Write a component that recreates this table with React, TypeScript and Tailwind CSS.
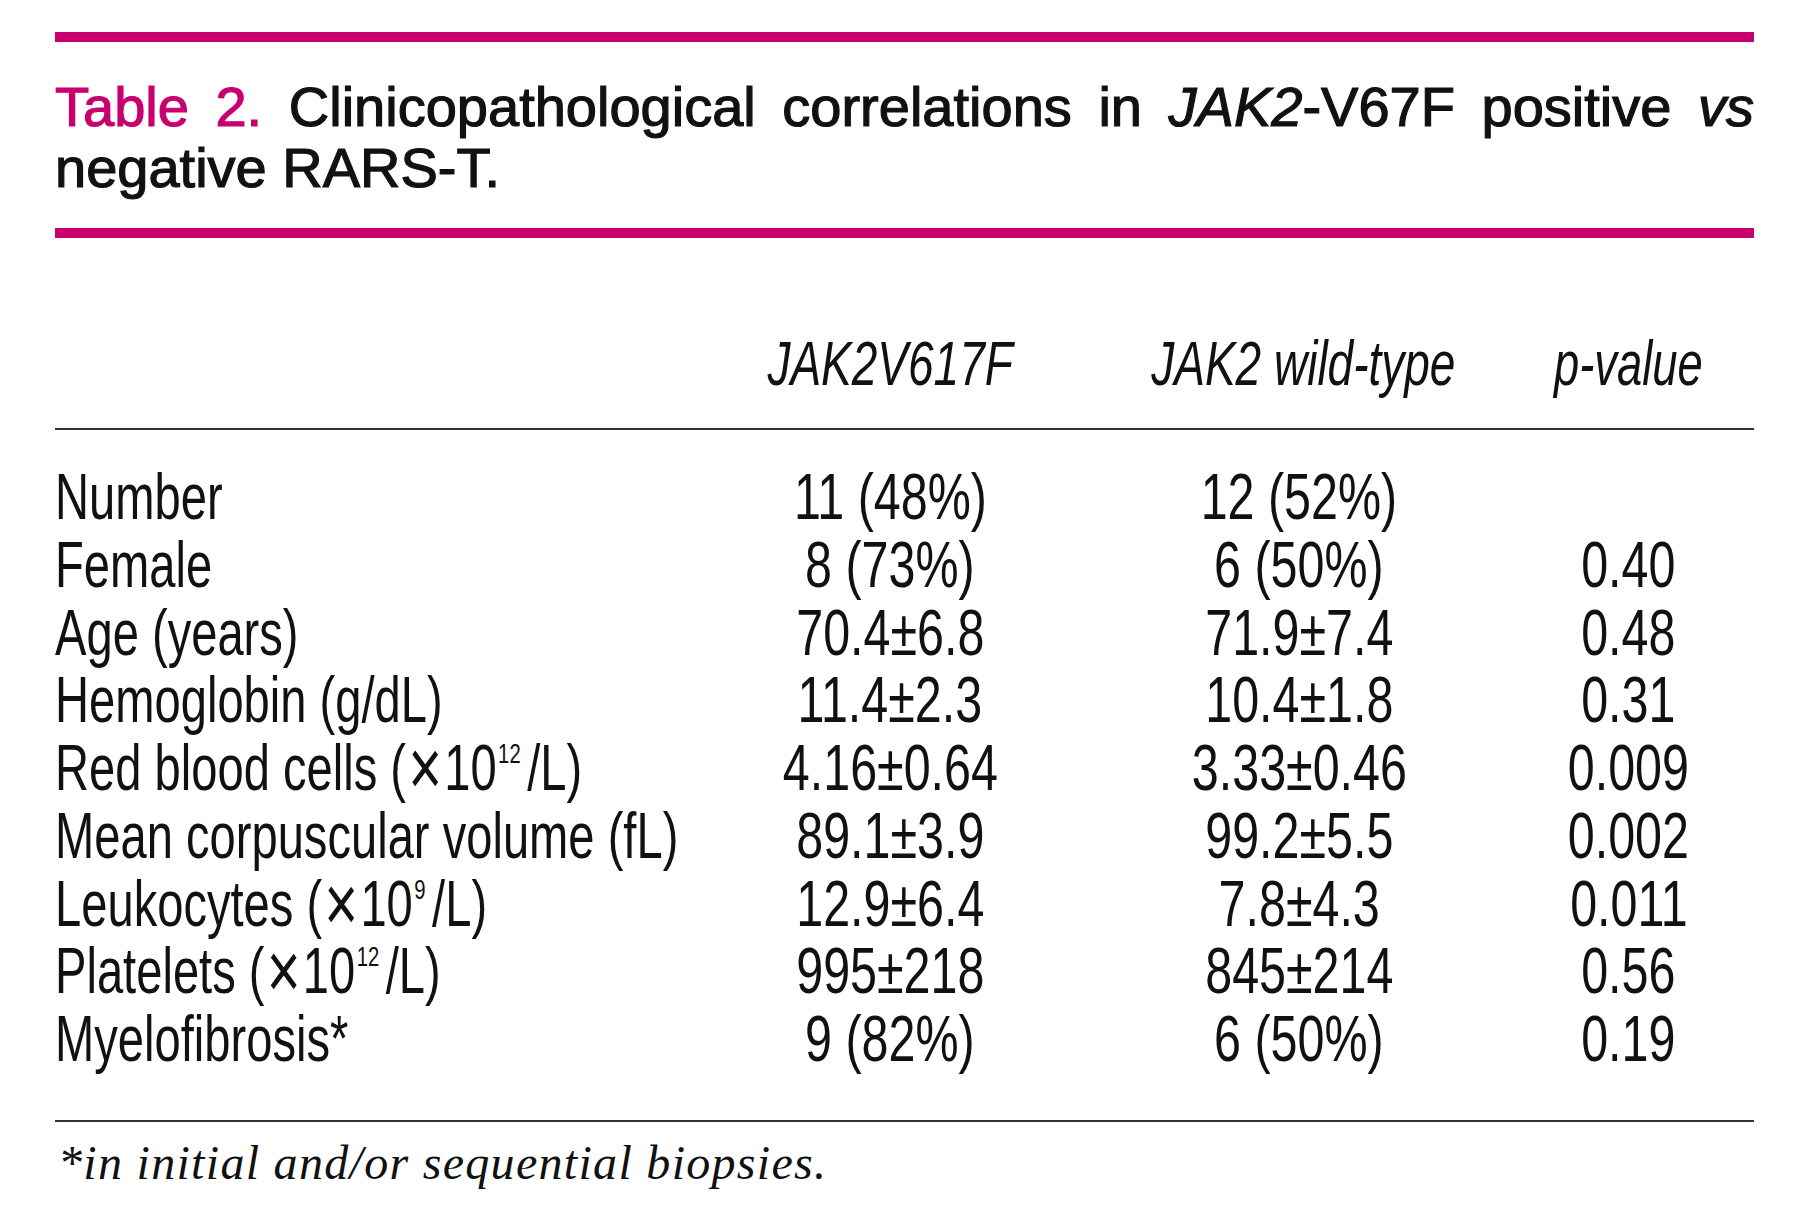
import React from "react";

function Label({ children }: { children: React.ReactNode }) {
  return (
    <div className="whitespace-nowrap">
      <span className="inline-block origin-left scale-x-[0.725]">{children}</span>
    </div>
  );
}

function Val({ children }: { children?: React.ReactNode }) {
  return (
    <div className="whitespace-nowrap text-center">
      <span className="inline-block origin-center scale-x-[0.745]">{children}</span>
    </div>
  );
}

function Sup({ children }: { children: React.ReactNode }) {
  return <span className="ml-[2px] mr-[9px] text-[28px] leading-[0] [vertical-align:27px]">{children}</span>;
}

function Times() {
  return <span className="mx-[3px] text-[80px] leading-[0] [vertical-align:-5px]">×</span>;
}

const rows: [React.ReactNode, string, string, string][] = [
  ["Number", "11 (48%)", "12 (52%)", ""],
  ["Female", "8 (73%)", "6 (50%)", "0.40"],
  ["Age (years)", "70.4±6.8", "71.9±7.4", "0.48"],
  ["Hemoglobin (g/dL)", "11.4±2.3", "10.4±1.8", "0.31"],
  [
    <>
      Red blood cells (<Times />10<Sup>12</Sup>/L)
    </>,
    "4.16±0.64",
    "3.33±0.46",
    "0.009",
  ],
  ["Mean corpuscular volume (fL)", "89.1±3.9", "99.2±5.5", "0.002"],
  [
    <>
      Leukocytes (<Times />10<Sup>9</Sup>/L)
    </>,
    "12.9±6.4",
    "7.8±4.3",
    "0.011",
  ],
  [
    <>
      Platelets (<Times />10<Sup>12</Sup>/L)
    </>,
    "995±218",
    "845±214",
    "0.56",
  ],
  ["Myelofibrosis*", "9 (82%)", "6 (50%)", "0.19"],
];

export default function App() {
  return (
    <div className="min-h-[1219px] w-[1800px] bg-white text-[#111] [font-family:'Liberation_Sans',Arial,sans-serif]">
      <div className="ml-[55px] w-[1699px] pt-[32px]">
        <div className="h-[10px] bg-[#c8006e]" />
        <p className="mt-[34px] text-justify text-[56px] leading-[61px] [-webkit-text-stroke:1.2px_currentColor]">
          <span className="text-[#c8006e]">Table 2.</span> Clinicopathological correlations in{" "}
          <i>JAK2</i>-V67F positive <i>vs</i> negative RARS-T.
        </p>
        <div className="mt-[30px] h-[10px] bg-[#c8006e]" />

        <div className="mt-[95px] grid grid-cols-[630px_410px_408px_251px] text-[63px] italic leading-[60px]">
          <div />
          <div className="whitespace-nowrap text-center">
            <span className="inline-block origin-center scale-x-[0.73]">JAK2V617F</span>
          </div>
          <div className="whitespace-nowrap text-center">
            <span className="inline-block origin-center scale-x-[0.73]">JAK2 wild-type</span>
          </div>
          <div className="whitespace-nowrap text-center">
            <span className="inline-block origin-center scale-x-[0.72]">p-value</span>
          </div>
        </div>

        <div className="mt-[35px] h-[2px] bg-[#333]" />

        <div className="mt-[33px] grid grid-cols-[630px_410px_408px_251px] auto-rows-[67.75px] text-[65px] leading-[67.75px]">
          {rows.map((r, i) => (
            <React.Fragment key={i}>
              <Label>{r[0]}</Label>
              <Val>{r[1]}</Val>
              <Val>{r[2]}</Val>
              <Val>{r[3]}</Val>
            </React.Fragment>
          ))}
        </div>

        <div className="mt-[47px] h-[2px] bg-[#333]" />

        <p className="mt-[17px] pl-[3px] text-[48px] italic leading-[48px] tracking-[1.3px] [font-family:'Liberation_Serif','Times_New_Roman',serif]">
          *in initial and/or sequential biopsies.
        </p>
      </div>
    </div>
  );
}
